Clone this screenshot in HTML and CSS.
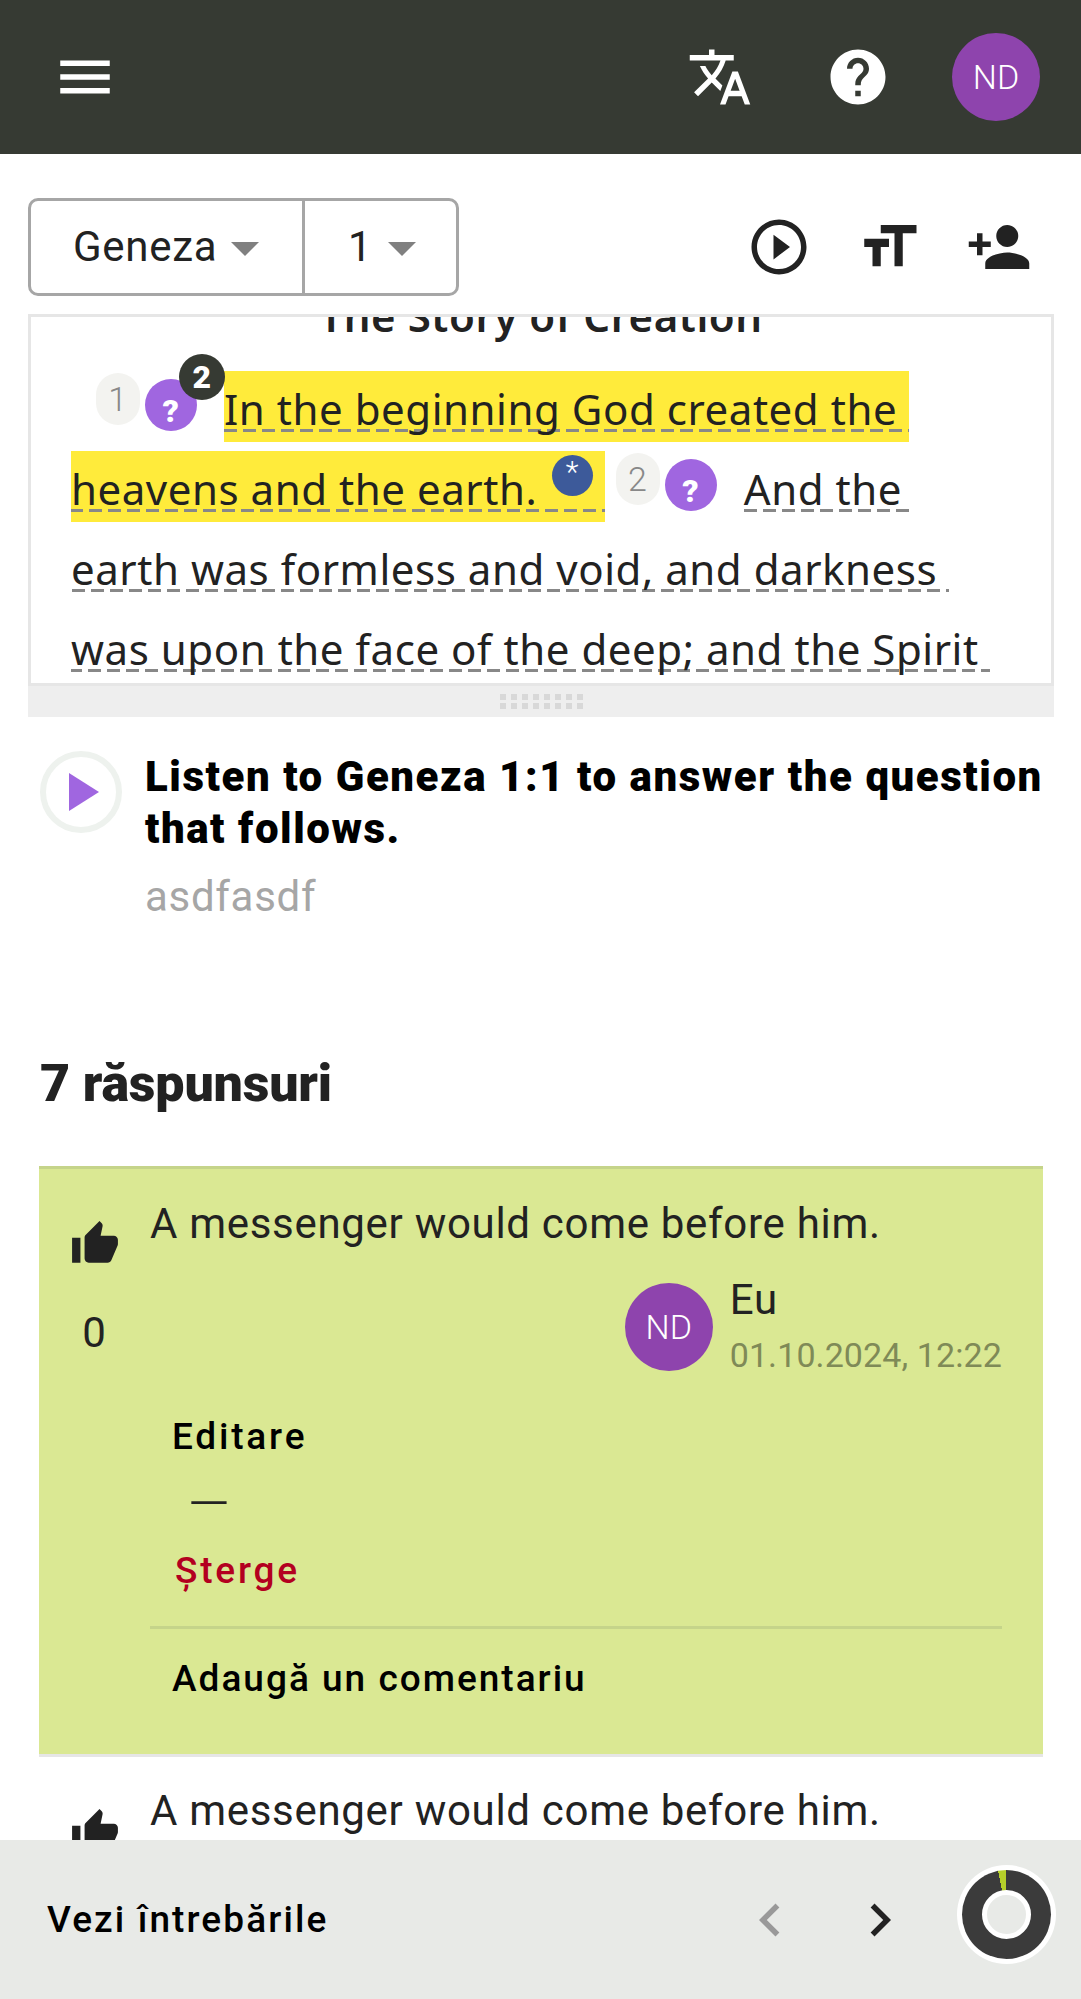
FILE: index.html
```html
<!DOCTYPE html>
<html lang="ro">

<head>
    <meta charset="UTF-8">
    <meta name="viewport" content="width=device-width, initial-scale=1.0">
    <title>Geneza 1</title>
    <link rel="stylesheet" href="styles.css">
</head>

<body>
    <div class="app">
        <!-- top bar -->
        <header class="topbar">
            <div class="topbar-btn">
                <svg class="icon" viewBox="0 0 24 24"><path d="M3 18h18v-2H3v2zm0-5h18v-2H3v2zm0-7v2h18V6H3z"/></svg>
            </div>
            <div class="topbar-spacer"></div>
            <div class="topbar-btn">
                <svg class="icon" viewBox="0 0 24 24"><path d="M12.87 15.07l-2.54-2.51.03-.03c1.74-1.94 2.98-4.17 3.71-6.53H17V4h-7V2H8v2H1v1.99h11.17C11.5 7.92 10.44 9.75 9 11.35 8.07 10.32 7.3 9.19 6.69 8h-2c.73 1.63 1.73 3.17 2.98 4.56l-5.09 5.02L4 19l5-5 3.11 3.11.76-2.04zM18.5 10h-2L12 22h2l1.12-3h4.75L21 22h2l-4.5-12zm-2.62 7l1.62-4.33L19.12 17h-3.24z"/></svg>
            </div>
            <div class="topbar-btn">
                <svg class="icon" viewBox="0 0 24 24"><path d="M12 2C6.48 2 2 6.48 2 12s4.48 10 10 10 10-4.48 10-10S17.52 2 12 2zm1 17h-2v-2h2v2zm2.07-7.75l-.9.92C13.45 12.9 13 13.5 13 15h-2v-.5c0-1.1.45-2.1 1.17-2.83l1.24-1.26c.37-.36.59-.86.59-1.41 0-1.1-.9-2-2-2s-2 .9-2 2H8c0-2.21 1.79-4 4-4s4 1.79 4 4c0 .88-.36 1.68-.93 2.25z"/></svg>
            </div>
            <div class="topbar-btn">
                <div class="avatar">ND</div>
            </div>
        </header>

        <main class="content">
            <!-- book and chapter pickers -->
            <div class="toolbar">
                <div class="picker">
                    <div class="picker-book">Geneza<span class="caret"></span></div>
                    <div class="picker-chapter">1<span class="caret"></span></div>
                </div>
                <div class="toolbar-icons">
                    <div class="toolbar-btn">
                        <svg class="icon" viewBox="0 0 24 24"><path d="M10 16.5l6-4.5-6-4.5v9zM12 2C6.48 2 2 6.48 2 12s4.48 10 10 10 10-4.48 10-10S17.52 2 12 2zm0 18c-4.41 0-8-3.59-8-8s3.59-8 8-8 8 3.59 8 8-3.59 8-8 8z"/></svg>
                    </div>
                    <div class="toolbar-btn">
                        <svg class="icon" viewBox="0 0 24 24"><path d="M9 4v3h5v12h3V7h5V4H9zm-6 8h3v7h3v-7h3V9H3v3z"/></svg>
                    </div>
                    <div class="toolbar-btn">
                        <svg class="icon" viewBox="0 0 24 24"><path d="M15 12c2.21 0 4-1.79 4-4s-1.79-4-4-4-4 1.79-4 4 1.79 4 4 4zm-9-2V7H4v3H1v2h3v3h2v-3h3v-2H6zm9 4c-2.67 0-8 1.34-8 4v2h16v-2c0-2.66-5.33-4-8-4z"/></svg>
                    </div>
                </div>
            </div>

            <!-- scripture text, scrolled a little. no whitespace between the marks on purpose -->
            <section class="reader">
                <h2 class="reader-title">The Story of Creation</h2>
                <p class="reader-text"><span class="verse-num">1</span><span class="verse-q">?<span class="verse-count">2</span></span><span class="verse verse-marked">In the beginning God created the heavens and the earth. <span class="note">*</span></span><span class="verse-num verse-num-next">2</span><span class="verse-q">?</span><span class="verse">And the earth was formless and void, and darkness was upon the face of the deep; and the Spirit of God</span></p>
            </section>
            <div class="handle"><div class="handle-dots"></div></div>

            <!-- question -->
            <section class="prompt">
                <div class="prompt-play"><span class="prompt-triangle"></span></div>
                <div class="prompt-body">
                    <h3 class="prompt-title">Listen to Geneza 1:1 to answer the question that follows.</h3>
                    <p class="prompt-sub">asdfasdf</p>
                </div>
            </section>

            <h2 class="answers-title">7 răspunsuri</h2>

            <article class="answer answer-mine">
                <div class="vote">
                    <svg class="vote-icon" viewBox="0 0 24 24"><path d="M1 21h4V9H1v12zm22-11c0-1.1-.9-2-2-2h-6.31l.95-4.57.03-.32c0-.41-.17-.79-.44-1.06L14.17 1 7.59 7.59C7.22 7.95 7 8.45 7 9v10c0 1.1.9 2 2 2h9c.83 0 1.54-.5 1.84-1.22l3.02-7.05c.09-.23.14-.47.14-.73v-2z"/></svg>
                    <div class="vote-count">0</div>
                </div>
                <div class="answer-body">
                    <p class="answer-text">A messenger would come before him.</p>
                    <div class="author">
                        <div class="avatar">ND</div>
                        <div class="author-meta">
                            <div class="author-name">Eu</div>
                            <div class="author-date">01.10.2024, 12:22</div>
                        </div>
                    </div>
                    <div class="actions">
                        <div class="action action-wide">Editare</div>
                        <div class="action-dash">—</div>
                        <div class="action action-wide action-delete">Șterge</div>
                    </div>
                    <div class="action action-comment">Adaugă un comentariu</div>
                </div>
            </article>

            <article class="answer">
                <div class="vote">
                    <svg class="vote-icon" viewBox="0 0 24 24"><path d="M1 21h4V9H1v12zm22-11c0-1.1-.9-2-2-2h-6.31l.95-4.57.03-.32c0-.41-.17-.79-.44-1.06L14.17 1 7.59 7.59C7.22 7.95 7 8.45 7 9v10c0 1.1.9 2 2 2h9c.83 0 1.54-.5 1.84-1.22l3.02-7.05c.09-.23.14-.47.14-.73v-2z"/></svg>
                </div>
                <div class="answer-body">
                    <p class="answer-text">A messenger would come before him.</p>
                </div>
            </article>
        </main>

        <!-- bottom bar -->
        <footer class="bottombar">
            <div class="bottombar-label">Vezi întrebările</div>
            <div class="bottombar-btn bottombar-btn-off">
                <svg class="icon" viewBox="0 0 24 24"><path d="M15.41 7.41L14 6l-6 6 6 6 1.41-1.41L10.83 12z"/></svg>
            </div>
            <div class="bottombar-btn">
                <svg class="icon" viewBox="0 0 24 24"><path d="M10 6L8.59 7.41 13.17 12l-4.58 4.59L10 18l6-6z"/></svg>
            </div>
            <div class="donut">
                <div class="donut-ring"><div class="donut-hole"></div></div>
            </div>
        </footer>
    </div>
</body>

</html>
```

FILE: styles.css
```css
body {
    margin: 0;
    font-family: Roboto, Arial, sans-serif;
    font-size: 42px;
    line-height: 52px;
    letter-spacing: 0.7px;
    color: #222;
    background-color: #fff;
}

h2,
h3,
p {
    margin: 0;
}

.app {
    display: flex;
    flex-direction: column;
    height: 100vh;
    overflow: hidden;
}

.icon {
    display: block;
    width: 66px;
    height: 66px;
    fill: currentColor;
}

.avatar {
    display: flex;
    align-items: center;
    justify-content: center;
    flex: none;
    width: 88px;
    height: 88px;
    border-radius: 50%;
    background-color: #8e44ad;
    color: #fff;
    font-size: 34px;
    font-weight: 300;
    letter-spacing: 0;
}

/* top bar */
.topbar {
    display: flex;
    flex: none;
    align-items: center;
    height: 154px;
    padding: 0 16px;
    background-color: #363a33;
    color: #fff;
}

.topbar-btn {
    display: flex;
    align-items: center;
    justify-content: center;
    width: 138px;
}

.topbar-spacer {
    flex: 1;
}

.content {
    flex: 1;
    min-height: 0;
    overflow: hidden;
}

/* book and chapter pickers */
.toolbar {
    display: flex;
    align-items: center;
    justify-content: space-between;
    margin: 44px 28px 18px;
}

.picker {
    display: flex;
    height: 98px;
    box-sizing: border-box;
    border: 3px solid #a6a6a6;
    border-radius: 10px;
    line-height: 92px;
}

.picker-book {
    display: flex;
    align-items: center;
    width: 229px;
    padding-left: 42px;
    border-right: 3px solid #a6a6a6;
}

.picker-chapter {
    display: flex;
    align-items: center;
    width: 108px;
    padding-left: 43px;
}

.caret {
    width: 0;
    height: 0;
    margin-left: 14px;
    margin-top: 4px;
    border-top: 14px solid #808080;
    border-left: 14px solid transparent;
    border-right: 14px solid transparent;
}

.picker-chapter .caret {
    margin-left: 16px;
}

.toolbar-icons {
    display: flex;
    margin-right: -1px;
}

.toolbar-btn {
    display: flex;
    justify-content: center;
    width: 110px;
}

/* scripture */
.reader {
    height: 372px;
    box-sizing: border-box;
    margin: 0 27px 0 28px;
    padding: 0 40px;
    border: 3px solid #e6e6e6;
    overflow: hidden;
    font-family: "Noto Sans", Arial, sans-serif;
    letter-spacing: 0.55px;
}

.reader-title {
    margin-top: -26px;
    margin-bottom: 28px;
    font-size: 42px;
    font-weight: 600;
    line-height: 50px;
    text-align: center;
}

.reader-text {
    font-size: 42px;
    line-height: 80px;
    text-indent: 25px;
}

.verse {
    padding: 9px 0 5px;
    background-image: linear-gradient(to right, #888 13px, transparent 13px);
    background-repeat: repeat-x;
    background-size: 19px 3px;
    background-position: 0 calc(100% - 10px);
    white-space: pre-wrap;
}

.verse-marked {
    background-color: #ffeb3b;
    color: #222;
}

.verse-num {
    display: inline-block;
    width: 44px;
    height: 52px;
    margin-right: 5px;
    border-radius: 22px;
    background-color: #f3f3f0;
    color: #888;
    font-family: Roboto, Arial, sans-serif;
    font-size: 34px;
    font-weight: 300;
    line-height: 52px;
    text-align: center;
    text-indent: 0;
    vertical-align: 14px;
}

.verse-num-next {
    margin-left: 11px;
}

.verse-q {
    display: inline-block;
    position: relative;
    width: 52px;
    height: 52px;
    margin-right: 27px;
    border-radius: 50%;
    background-color: #a066e0;
    color: #fff;
    font-family: Roboto, Arial, sans-serif;
    font-size: 32px;
    font-weight: 900;
    line-height: 64px;
    text-align: center;
    text-indent: 0;
    vertical-align: 3px;
}

.verse-count {
    position: absolute;
    top: -25px;
    left: 34px;
    width: 46px;
    height: 46px;
    border-radius: 50%;
    background-color: #363a33;
    font-size: 32px;
    font-weight: 900;
    line-height: 46px;
}

.note {
    display: inline-block;
    width: 41px;
    height: 41px;
    margin-left: 3px;
    margin-right: 12px;
    border-radius: 50%;
    background-color: #3d5a9a;
    color: #fff;
    font-family: Roboto, Arial, sans-serif;
    font-size: 30px;
    font-weight: 300;
    line-height: 33px;
    text-align: center;
    text-indent: 0;
    vertical-align: 23px;
}

/* resize handle */
.handle {
    display: flex;
    align-items: center;
    justify-content: center;
    height: 31px;
    margin: 0 27px 0 28px;
    background-color: #eee;
}

.handle-dots {
    width: 83px;
    height: 15px;
    background-image: conic-gradient(from 270deg at 6px 6px, #d8d8d8 25%, transparent 0);
    background-size: 11px 9px;
}

/* question */
.prompt {
    display: flex;
    gap: 23px;
    margin-top: 34px;
    padding: 0 30px 0 40px;
}

.prompt-play {
    display: flex;
    flex: none;
    align-items: center;
    box-sizing: border-box;
    width: 82px;
    height: 82px;
    padding-left: 23px;
    border: 6px solid #eef2ee;
    border-radius: 50%;
}

.prompt-triangle {
    border-top: 19px solid transparent;
    border-bottom: 19px solid transparent;
    border-left: 30px solid #a066e0;
}

.prompt-title {
    color: #000;
    font-size: 42px;
    font-weight: 900;
    line-height: 52px;
    letter-spacing: 1.55px;
}

.prompt-sub {
    margin-top: 16px;
    color: #a6a6a6;
}

.answers-title {
    margin: 131px 0 52px 40px;
    font-size: 52px;
    font-weight: 900;
    line-height: 60px;
    letter-spacing: -0.2px;
}

/* answers */
.answer {
    display: flex;
    margin: 0 38px 0 39px;
}

.answer-mine {
    border-top: 3px solid #c5d48a;
    border-bottom: 3px solid #e6e6e6;
    background-color: #dae893;
}

.vote {
    flex: none;
    width: 111px;
    padding-top: 50px;
}

.vote-icon {
    display: block;
    width: 50px;
    height: 50px;
    margin: 0 auto 38px;
    fill: #222;
}

.vote-count {
    text-align: center;
}

.answer-body {
    flex: 1;
    padding: 29px 41px 0 0;
}

.answer + .answer .answer-body {
    padding-top: 28px;
}

.answer-text {
    line-height: 52px;
}

.author {
    display: flex;
    align-items: center;
    justify-content: flex-end;
    gap: 17px;
    margin-top: 24px;
}

.author-date {
    margin-top: 5px;
    color: #7f8a57;
    font-size: 34px;
    line-height: 48px;
    letter-spacing: 0.1px;
}

.actions {
    padding-bottom: 31px;
    border-bottom: 3px solid #c5d48a;
    margin-top: 34px;
}

.action {
    padding-left: 22px;
    color: #000;
    font-size: 37px;
    font-weight: 500;
    line-height: 48px;
    letter-spacing: 2px;
}

.action-wide {
    letter-spacing: 2.8px;
}

.action-dash {
    padding-left: 38px;
    font-size: 54px;
    font-weight: 300;
    line-height: 86px;
}

.action-delete {
    padding-left: 25px;
    color: #b3001f;
}

.action-comment {
    margin-top: 26px;
    padding-bottom: 51px;
}

/* bottom bar */
.bottombar {
    display: flex;
    flex: none;
    align-items: center;
    height: 159px;
    padding: 0 25px 0 47px;
    background-color: #e8eae7;
    color: #000;
}

.bottombar-label {
    flex: 1;
    font-size: 37px;
    font-weight: 500;
    letter-spacing: 2.1px;
}

.bottombar-btn {
    display: flex;
    justify-content: center;
    width: 110px;
    color: #222;
}

.bottombar-btn-off {
    color: #999;
}

.donut {
    display: flex;
    align-items: center;
    justify-content: center;
    width: 99px;
    height: 99px;
    margin: 0 0 11px 22px;
    border-radius: 50%;
    background-color: #fff;
}

.donut-ring {
    display: flex;
    align-items: center;
    justify-content: center;
    width: 89px;
    height: 89px;
    border-radius: 50%;
    background-image: conic-gradient(#3b3b3b 97%, #b5cf2a 97%);
}

.donut-hole {
    box-sizing: border-box;
    width: 49px;
    height: 49px;
    border: 5px solid #fff;
    border-radius: 50%;
    background-color: #e8eae7;
}
```
